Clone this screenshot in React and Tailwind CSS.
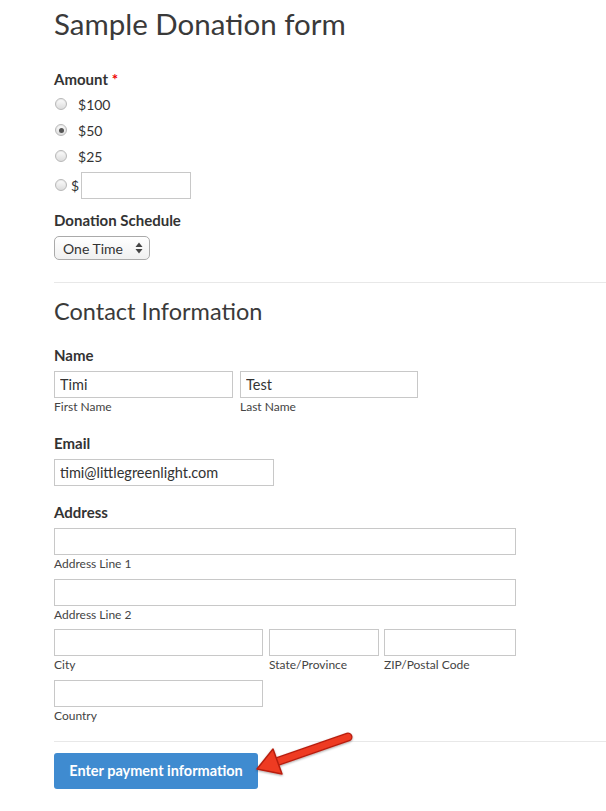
import React, { useState } from "react";

const font = { fontFamily: "Lato, 'Open Sans', sans-serif" };

const Radio = ({ checked }) => (
  <span className="flex h-[12px] w-[12px] items-center justify-center rounded-full border border-[#b8b8b8] bg-gradient-to-b from-[#fdfdfd] to-[#dcdcdc] shadow-[inset_0_1px_1px_rgba(0,0,0,0.08)]">
    {checked && <span className="h-[5px] w-[5px] rounded-full bg-[#555]"></span>}
  </span>
);

const Input = ({ value = "", className = "" }) => (
  <input
    readOnly
    value={value}
    className={"h-[27px] border border-[#c8c8c8] bg-white px-[5px] text-[14.5px] text-[#333] outline-none " + className}
  />
);

const SubLabel = ({ children }) => (
  <div className="mt-[1px] text-[12px] leading-[16px] text-[#444]">{children}</div>
);

const Label = ({ children, className = "" }) => (
  <div className={"text-[15px] font-bold leading-[20px] text-[#333] " + className}>{children}</div>
);

export default function App() {
  const [amount] = useState("50");

  return (
    <div className="relative min-h-[811px] w-[606px] overflow-hidden bg-white pl-[54px]" style={font}>
      <h1 className="mt-[6px] text-[29.5px] leading-[36px] text-[#3a3a3a]">Sample Donation form</h1>

      <Label className="mt-[27px]">
        Amount <span className="text-[#e00]">*</span>
      </Label>

      <div className="mt-[2px]">
        {["100", "50", "25"].map((v) => (
          <div key={v} className="flex h-[26px] items-center gap-[11px] pl-[1px] text-[14px] text-[#333]">
            <Radio checked={amount === v} />
            <span>${v}</span>
          </div>
        ))}
        <div className="mt-[3px] flex h-[26px] items-center pl-[1px] text-[14px] text-[#333]">
          <Radio />
          <span className="ml-[4px]">$</span>
          <Input className="ml-[2px] w-[110px]" />
        </div>
      </div>

      <Label className="mt-[12px]">Donation Schedule</Label>
      <div className="mt-[6px] flex h-[24px] w-[96px] items-center justify-between rounded-[5px] border border-[#aaa] bg-gradient-to-b from-white to-[#f0f0f0] pl-[8px] pr-[6px] text-[14px] text-[#333]">
        <span>One Time</span>
        <svg width="8" height="12" viewBox="0 0 8 12">
          <path d="M4 0.5 L7.5 5 H0.5 Z" fill="#444" />
          <path d="M4 11.5 L7.5 7 H0.5 Z" fill="#444" />
        </svg>
      </div>

      <hr className="mt-[22px] border-0 border-t border-[#e8e8e8]" />

      <h2 className="mt-[13px] text-[23.5px] leading-[30px] text-[#3a3a3a]">Contact Information</h2>

      <Label className="mt-[19px]">Name</Label>
      <div className="mt-[6px] flex gap-[7px]">
        <div>
          <Input value="Timi" className="w-[179px]" />
          <SubLabel>First Name</SubLabel>
        </div>
        <div>
          <Input value="Test" className="w-[178px]" />
          <SubLabel>Last Name</SubLabel>
        </div>
      </div>

      <Label className="mt-[18px]">Email</Label>
      <Input value="timi@littlegreenlight.com" className="mt-[6px] block w-[220px]" />

      <Label className="mt-[16px]">Address</Label>
      <Input className="mt-[6px] block w-[462px]" />
      <SubLabel>Address Line 1</SubLabel>
      <Input className="mt-[7px] block w-[462px]" />
      <SubLabel>Address Line 2</SubLabel>
      <div className="mt-[6px] flex">
        <div>
          <Input className="w-[209px]" />
          <SubLabel>City</SubLabel>
        </div>
        <div className="ml-[6px]">
          <Input className="w-[110px]" />
          <SubLabel>State/Province</SubLabel>
        </div>
        <div className="ml-[5px]">
          <Input className="w-[132px]" />
          <SubLabel>ZIP/Postal Code</SubLabel>
        </div>
      </div>
      <Input className="mt-[7px] block w-[209px]" />
      <SubLabel>Country</SubLabel>

      <hr className="mt-[17px] border-0 border-t border-[#e8e8e8]" />

      <button className="mt-[11px] h-[36px] w-[204px] rounded-[3px] bg-[#3f8bd0] text-[14.5px] font-bold text-white">
        Enter payment information
      </button>

      <svg className="absolute left-[250px] top-[725px]" width="110" height="60" viewBox="0 0 110 60">
        <defs>
          <filter id="sh" x="-20%" y="-20%" width="140%" height="140%">
            <feDropShadow dx="0" dy="1" stdDeviation="1" floodColor="#000" floodOpacity="0.35" />
          </filter>
        </defs>
        <g filter="url(#sh)">
          <line x1="98" y1="12" x2="26" y2="37" stroke="#b81f10" strokeWidth="9" strokeLinecap="round" />
          <line x1="98" y1="12" x2="26" y2="37" stroke="#ee3a22" strokeWidth="6.5" strokeLinecap="round" />
          <path d="M7 44 L23 24 L32 49 Z" fill="#ee3a22" stroke="#b81f10" strokeWidth="1.5" strokeLinejoin="round" />
        </g>
      </svg>
    </div>
  );
}
